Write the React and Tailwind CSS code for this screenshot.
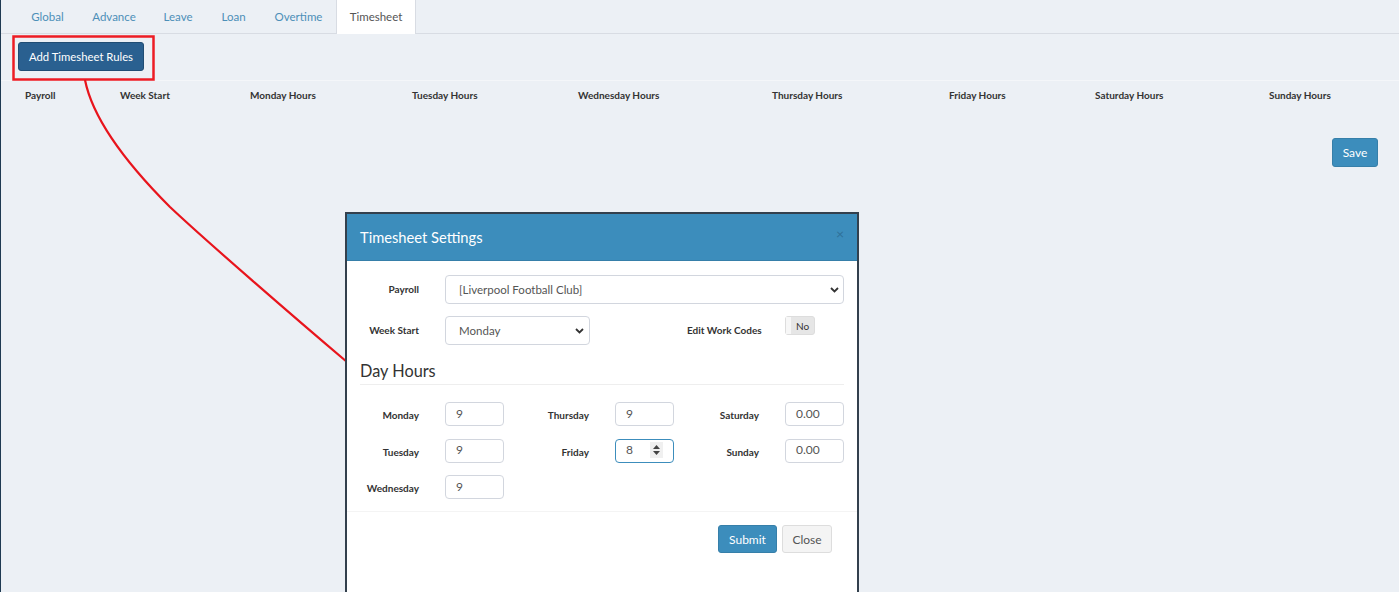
import React from "react";

const tabs = [
  ["Global", "w-[61px]"],
  ["Advance", "w-[72px]"],
  ["Leave", "w-[56px]"],
  ["Loan", "w-[55px]"],
  ["Overtime", "w-[75px]"],
];
const cols = [
  ["Payroll", "w-[95px]"],
  ["Week Start", "w-[130px]"],
  ["Monday Hours", "w-[162px]"],
  ["Tuesday Hours", "w-[166px]"],
  ["Wednesday Hours", "w-[194px]"],
  ["Thursday Hours", "w-[177px]"],
  ["Friday Hours", "w-[146px]"],
  ["Saturday Hours", "w-[174px]"],
  ["Sunday Hours", "w-[100px]"],
];

function Chevron() {
  return (
    <svg width="9" height="6" viewBox="0 0 9 6" fill="none">
      <path d="M1 1l3.5 3.5L8 1" stroke="#333" strokeWidth="1.8" />
    </svg>
  );
}

function Field({ label, value, labelW, focus }) {
  return (
    <div className="flex items-center h-[24px]">
      <div className={`${labelW} text-right text-[10px] font-bold text-[#333] leading-none whitespace-nowrap pt-[2px]`}>{label}</div>
      <div
        className={`ml-[26px] w-[59px] h-[24px] rounded-[4px] border bg-white flex items-center text-[12px] text-[#555] pl-[10px] pb-[1px] ${
          focus ? "border-[#3c8dbc]" : "border-[#d2d6de]"
        }`}
      >
        <span className="flex-1">{value}</span>
        {focus && (
          <span className="mr-[10px] w-[13px] h-[16px] bg-[#f0f0f0] flex flex-col items-center justify-center gap-[2px]">
            <svg width="7" height="4" viewBox="0 0 7 4"><path d="M3.5 0L7 4H0z" fill="#444" /></svg>
            <svg width="7" height="4" viewBox="0 0 7 4"><path d="M3.5 4L7 0H0z" fill="#444" /></svg>
          </span>
        )}
      </div>
    </div>
  );
}

export default function App() {
  return (
    <div className="relative w-[1399px] h-[592px] overflow-hidden bg-[#ecf0f5] border-l border-[#1f3a52] font-['Lato',sans-serif] text-[#333]">
      <div className="flex h-[34px] border-b border-[#d8dce3] pl-[16px] text-[11.5px]">
        {tabs.map(([t, w]) => (
          <div key={t} className={`${w} h-[33px] pt-[1px] flex items-center justify-center text-[#4d8fb8]`}>{t}</div>
        ))}
        <div className="w-[80px] h-[34px] bg-white border-x border-[#d8dce3] flex items-center justify-center text-[#555]">Timesheet</div>
      </div>

      <div className="h-[47px] border-b border-[#f4f6f9] pt-[8px] pl-[17px]">
        <div className="w-[126px] h-[29px] pt-[1px] rounded-[3px] bg-[#2a6090] border border-[#204d74] text-white text-[11.3px] flex items-center justify-center">
          Add Timesheet Rules
        </div>
      </div>

      <div className="flex pl-[24px] pt-[7px] text-[10px] font-bold text-[#333] leading-[14px]">
        {cols.map(([t, w]) => (
          <div key={t} className={w}>{t}</div>
        ))}
      </div>

      <div className="flex justify-end pr-[21px] pt-[36px]">
        <div className="w-[46px] h-[29px] rounded-[3px] bg-[#3c8dbc] border border-[#367fa9] text-white text-[12px] flex items-center justify-center">Save</div>
      </div>

      {/* Annotation */}
      <svg className="absolute left-[-1px] top-0 pointer-events-none" width="360" height="370" fill="none">
        <rect x="13.5" y="36.5" width="140" height="43" stroke="#ed1c24" strokeWidth="2.5" />
        <path d="M85 80C94 125 135 172 170 207C205 240 295 318 347 362" stroke="#e8141c" strokeWidth="2.2" />
      </svg>

      {/* Modal */}
      <div className="absolute left-[344px] top-[212px] w-[514px] h-[400px] bg-white border-2 border-[#33404d] border-b-0">
        <div className="relative h-[47px] bg-[#3c8dbc] border-b border-[#367fa9] flex items-center pl-[13px] text-white text-[14.7px]">
          Timesheet Settings
          <span className="absolute right-[13px] top-[13px] text-[#2f7199] text-[14px] leading-none">×</span>
        </div>

        <div className="px-[13px]">
          <div className="flex items-center h-[28px] mt-[14px]">
            <div className="w-[59px] text-right text-[10px] font-bold">Payroll</div>
            <div className="ml-[26px] w-[399px] h-[29px] rounded-[4px] border border-[#d2d6de] flex items-center pl-[13px] pr-[4px] pt-[1px] text-[11.5px] text-[#555] justify-between">
              [Liverpool Football Club]
              <Chevron />
            </div>
          </div>

          <div className="flex h-[29px] mt-[13px]">
            <div className="w-[59px] text-right text-[10px] font-bold leading-[29px] whitespace-nowrap">Week Start</div>
            <div className="ml-[26px] w-[145px] h-[29px] rounded-[4px] border border-[#d2d6de] flex items-center pl-[13px] pr-[5px] pt-[1px] text-[11.5px] text-[#555] justify-between">
              Monday
              <Chevron />
            </div>
            <div className="ml-[97px] w-[73px] text-[10px] font-bold leading-[29px] whitespace-nowrap">Edit Work Codes</div>
            <div className="ml-[25px] w-[30px] h-[19px] rounded-[3px] border border-[#ddd] bg-[#e6e6e6] flex text-[10px] text-[#333] items-center">
              <span className="w-[5px] h-full bg-[#f7f7f7]"></span>
              <span className="flex-1 text-center leading-none">No</span>
            </div>
          </div>

          <div className="mt-[15px] h-[25px] border-b border-[#eee] text-[16.3px] leading-[22px] text-[#333]">Day Hours</div>

          <div className="flex mt-[17px]">
            <div className="flex flex-col gap-[12.5px] w-[144px]">
              <Field label="Monday" value="9" labelW="w-[59px]" />
              <Field label="Tuesday" value="9" labelW="w-[59px]" />
              <Field label="Wednesday" value="9" labelW="w-[59px]" />
            </div>
            <div className="flex flex-col gap-[12.5px] w-[170px]">
              <Field label="Thursday" value="9" labelW="w-[85px]" />
              <Field label="Friday" value="8" labelW="w-[85px]" focus />
            </div>
            <div className="flex flex-col gap-[12.5px]">
              <Field label="Saturday" value="0.00" labelW="w-[85px]" />
              <Field label="Sunday" value="0.00" labelW="w-[85px]" />
            </div>
          </div>
        </div>

        <div className="mt-[12px] border-t border-[#f4f4f4] flex justify-end gap-[5px] pt-[13px] pr-[25px] text-[12px]">
          <div className="w-[59px] h-[28px] pt-[1px] rounded-[3px] bg-[#3c8dbc] border border-[#367fa9] text-white flex items-center justify-center">Submit</div>
          <div className="w-[50px] h-[28px] pt-[1px] rounded-[3px] bg-[#f4f4f4] border border-[#ddd] text-[#555] flex items-center justify-center">Close</div>
        </div>
      </div>
    </div>
  );
}
